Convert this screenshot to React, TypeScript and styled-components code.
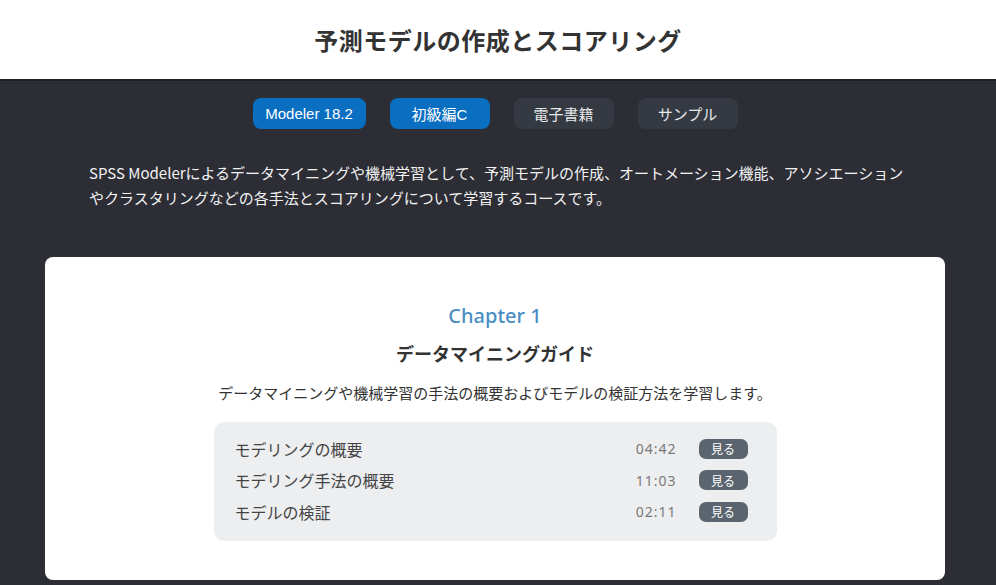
import React from 'react'
import styled, { createGlobalStyle } from 'styled-components'

const GlobalStyle = createGlobalStyle`
  html, body {
    margin: 0;
    padding: 0;
    background: #2c2d35;
  }
  body {
    font-family: "Noto Sans", "Noto Sans CJK JP", sans-serif;
  }
`

const tags = [
  { label: 'Modeler 18.2', active: true, width: 113 },
  { label: '初級編C', active: true, width: 100 },
  { label: '電子書籍', active: false, width: 100 },
  { label: 'サンプル', active: false, width: 100 },
]

const lessons = [
  { title: 'モデリングの概要', time: '04:42' },
  { title: 'モデリング手法の概要', time: '11:03' },
  { title: 'モデルの検証', time: '02:11' },
]

export default function App() {
  return (
    <Page>
      <GlobalStyle />
      <Header>
        <Title>予測モデルの作成とスコアリング</Title>
      </Header>
      <Main>
        <TagRow>
          {tags.map((t) => (
            <Tag key={t.label} $active={t.active} $width={t.width}>
              {t.label}
            </Tag>
          ))}
        </TagRow>
        <Description>
          SPSS Modelerによるデータマイニングや機械学習として、予測モデルの作成、オートメーション機能、アソシエーション
          <br />
          やクラスタリングなどの各手法とスコアリングについて学習するコースです。
        </Description>
        <Card>
          <ChapterLabel>Chapter 1</ChapterLabel>
          <ChapterTitle>データマイニングガイド</ChapterTitle>
          <ChapterText>データマイニングや機械学習の手法の概要およびモデルの検証方法を学習します。</ChapterText>
          <LessonList>
            {lessons.map((l) => (
              <LessonRow key={l.title}>
                <LessonTitle>{l.title}</LessonTitle>
                <LessonTime>{l.time}</LessonTime>
                <WatchButton>見る</WatchButton>
              </LessonRow>
            ))}
          </LessonList>
        </Card>
      </Main>
    </Page>
  )
}

const Page = styled.div`
  display: flex;
  flex-direction: column;
  min-height: 585px;
  background: #2c2d35;
`

const Header = styled.header`
  display: flex;
  align-items: center;
  justify-content: center;
  height: 79px;
  background: #ffffff;
  border-bottom: 2px solid #1f2026;
`

const Title = styled.h1`
  margin: 0;
  font-family: "Noto Sans CJK JP", sans-serif;
  font-size: 24px;
  font-weight: 700;
  color: #333333;
  letter-spacing: 0.5px;
`

const Main = styled.main`
  display: flex;
  flex-direction: column;
  align-items: center;
  padding: 17px 51px 5px 45px;
`

const TagRow = styled.div`
  display: flex;
  gap: 24px;
`

const Tag = styled.div<{ $active: boolean; $width: number }>`
  display: flex;
  align-items: center;
  justify-content: center;
  width: ${({ $width }) => $width}px;
  height: 31px;
  border-radius: 8px;
  background: ${({ $active }) => ($active ? '#0a6ec1' : '#353a42')};
  color: ${({ $active }) => ($active ? '#ffffff' : '#e6e8ea')};
  font-family: "Liberation Sans", "Noto Sans CJK JP", sans-serif;
  font-size: 15px;
`

const Description = styled.p`
  align-self: stretch;
  margin: 31px 0 0 44px;
  font-family: "Noto Sans CJK JP", sans-serif;
  font-size: 15px;
  line-height: 25px;
  color: #f2f2f2;
  white-space: nowrap;
`

const Card = styled.section`
  align-self: stretch;
  display: flex;
  flex-direction: column;
  align-items: center;
  margin-top: 47px;
  padding: 46px 0 39px;
  background: #ffffff;
  border-radius: 8px;
`

const ChapterLabel = styled.div`
  font-family: "Noto Sans", sans-serif;
  font-size: 20px;
  line-height: 26px;
  font-weight: 500;
  color: #4a8ec4;
`

const ChapterTitle = styled.h2`
  margin: 11px 0 0;
  font-family: "Noto Sans CJK JP", sans-serif;
  font-size: 18px;
  line-height: 26px;
  font-weight: 700;
  color: #333333;
`

const ChapterText = styled.p`
  margin: 16px 0 0;
  font-family: "Noto Sans CJK JP", sans-serif;
  font-size: 15px;
  line-height: 22px;
  color: #333333;
`

const LessonList = styled.div`
  display: flex;
  flex-direction: column;
  width: 563px;
  margin-top: 18px;
  padding: 11px 0 13px;
  box-sizing: border-box;
  background: #eceef0;
  border-radius: 10px;
`

const LessonRow = styled.div`
  display: flex;
  align-items: center;
  height: 31.5px;
  padding: 0 29px 0 21px;
`

const LessonTitle = styled.div`
  flex: 1;
  font-family: "Noto Sans CJK JP", sans-serif;
  font-size: 16px;
  color: #444444;
`

const LessonTime = styled.div`
  font-family: "Noto Sans", sans-serif;
  font-size: 14px;
  color: #7a7a7a;
  letter-spacing: 1px;
`

const WatchButton = styled.button`
  display: flex;
  align-items: center;
  justify-content: center;
  width: 49px;
  height: 20px;
  margin-left: 22px;
  padding: 0;
  border: none;
  border-radius: 7px;
  background: #5b6570;
  color: #ffffff;
  font-family: "Noto Sans CJK JP", sans-serif;
  font-size: 12px;
`
